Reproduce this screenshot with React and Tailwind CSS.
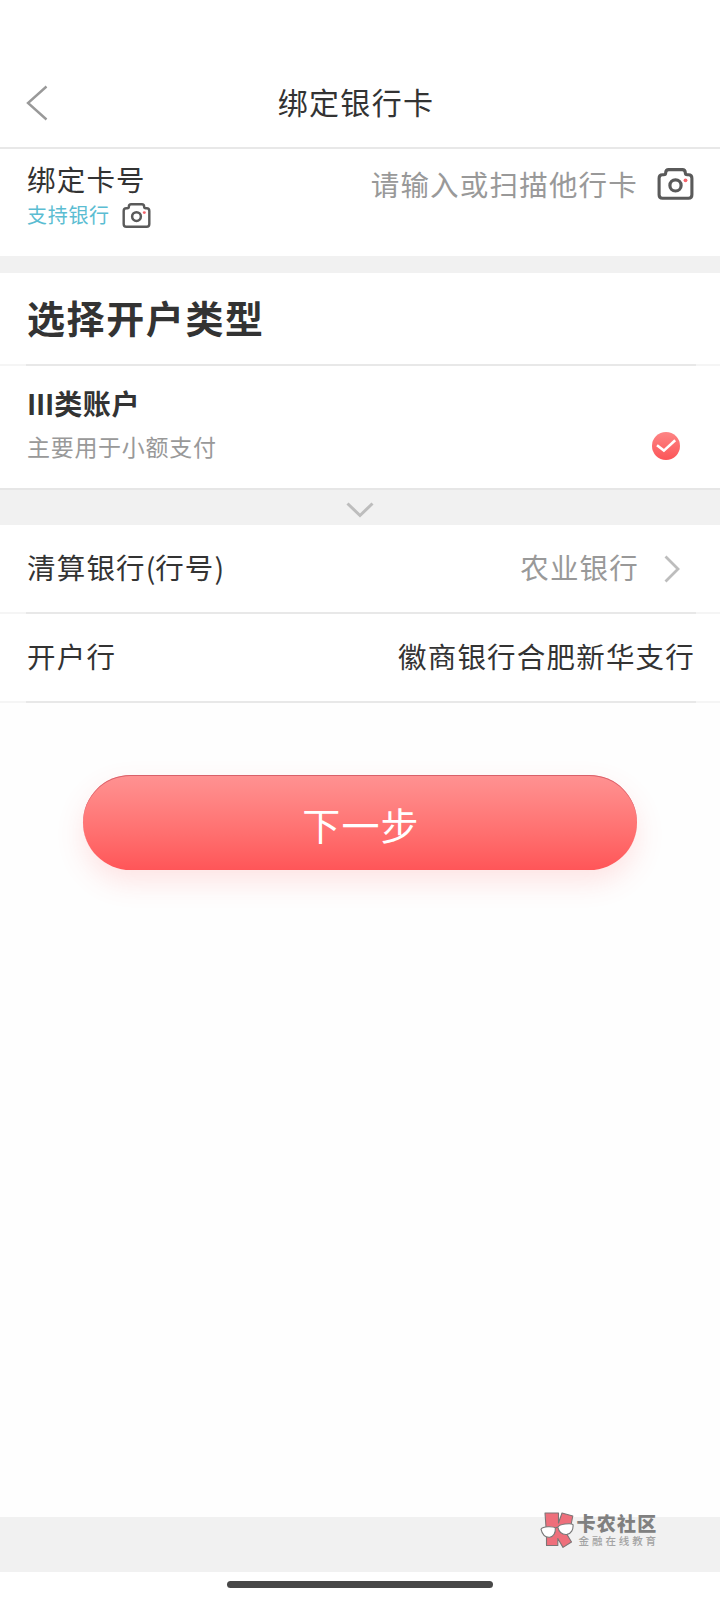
import React from 'react';

const CameraIcon = ({ className }) => (
  <svg viewBox="0 0 36 32" className={className} fill="none">
    <path
      d="M5 6.8 H6.2 C7.8 6.8 8.2 6.2 8.2 4.8 C8.2 2.4 9 1.6 11.2 1.6 H24.8 C27 1.6 27.8 2.4 27.8 4.8 C27.8 6.2 28.2 6.8 29.8 6.8 H31 C33.4 6.8 34.4 7.8 34.4 10.2 V26.8 C34.4 29.2 33.4 30.3 31 30.3 H5 C2.6 30.3 1.6 29.2 1.6 26.8 V10.2 C1.6 7.8 2.6 6.8 5 6.8 Z"
      stroke="#5a5a5a"
      strokeWidth="3.1"
    />
    <circle cx="18" cy="17.4" r="5.6" stroke="#5a5a5a" strokeWidth="3.2" />
    <circle cx="28" cy="12.3" r="1.9" fill="#f4636b" />
  </svg>
);

const Divider = () => (
  <div className="flex h-0.5 shrink-0 bg-[#f5f5f5] pr-6 pl-[26px]">
    <div className="flex-1 bg-[#e8e8e8]" />
  </div>
);

const Watermark = () => (
  <div className="flex">
    <svg viewBox="0 0 34 36" className="h-9 w-[34px]">
      <path
        d="M5 1 H18.5 V11 L22 1 L32.8 4 L31 13 L25.5 20 L31.5 30 L23 35.4 L17.8 26.5 V33.5 H6.5 V22 Z"
        fill="#ee6f7b"
        stroke="#7d7576"
        strokeWidth="1.1"
        strokeLinejoin="round"
      />
      <path d="M1 17.2 C2 15.6 5 14.8 8 14.7 C11 14.6 14.4 14.8 15.3 16 C15.8 21 13.4 24.8 9.8 25.2 C5.6 25.6 2.2 22.4 1 17.2 Z" fill="#fff" stroke="#777" strokeWidth="1.1" />
      <path d="M17.8 15.2 C18.6 13.4 21.6 12.4 25 12 C28.4 11.6 32 11.6 33 12.6 C33.6 17.6 31 21.8 27 22.4 C22.4 22.8 19 20.4 17.8 15.2 Z" fill="#fff" stroke="#777" strokeWidth="1.1" />
      <path d="M15.3 16 L17.8 15.2" stroke="#777" strokeWidth="1.3" />
    </svg>
    <div className="ml-[3px] flex flex-col whitespace-nowrap">
      <span className="text-[19px] leading-[22px] font-black tracking-[1.2px] text-[#808080]">卡农社区</span>
      <span className="ml-0.5 text-[10.5px] leading-[13px] font-medium tracking-[2.9px] text-[#a3a3a3]">金融在线教育</span>
    </div>
  </div>
);

const InfoRow = ({ label, children }) => (
  <div className="flex h-[87px] items-center justify-between pb-[3px] pl-[27px] text-[28.5px] leading-[42px] tracking-[1.2px]">
    {label}
    {children}
  </div>
);

const App = () => {
  return (
    <div className="flex h-[1600px] w-[720px] flex-col overflow-hidden bg-[#fefefe] font-['Noto_Sans_CJK_SC',sans-serif] text-[#333333]">
      {/* Header */}
      <header className="grid h-[149px] shrink-0 grid-cols-[1fr_auto_1fr] items-center border-b-2 border-[#e8e8e8] bg-white pt-[59px]">
        <svg viewBox="0 0 22 36" className="ml-[26px] h-9 w-[22px]" fill="none">
          <path d="M20.5 1.5 L2 18 L20.5 34.5" stroke="#999999" strokeWidth="2.4" />
        </svg>
        <h1 className="mr-2 mb-1 text-[30px] leading-[44px] tracking-[1.3px]">绑定银行卡</h1>
      </header>

      {/* Card number */}
      <section className="flex h-[107px] shrink-0 justify-between bg-white pl-[27px]">
        <div className="pt-[9px]">
          <div className="text-[28.5px] leading-[42px] tracking-[1.2px]">绑定卡号</div>
          <div className="mt-px flex items-center text-[20px] leading-7 tracking-[0.7px] text-[#5bbdd2]">
            支持银行
            <CameraIcon className="ml-3 h-[25px] w-[29px]" />
          </div>
        </div>
        <div className="flex h-[70px] items-center pr-[26px] text-[28.5px] tracking-[1.2px] text-[#999999]">
          <span>请输入或扫描他行卡</span>
          <CameraIcon className="ml-[19px] h-8 w-[37px]" />
        </div>
      </section>

      <div className="h-[17px] shrink-0 bg-[#f1f1f1]" />

      {/* Account type */}
      <section className="bg-white">
        <h2 className="flex h-[91px] items-center pb-[5px] pl-[27px] text-[38px] font-bold tracking-[1.6px]">选择开户类型</h2>
        <Divider />
        <div className="flex h-[122px] justify-between pt-4 pr-10 pl-[27px]">
          <div>
            <div className="text-[28px] leading-[42px] font-bold tracking-[0.7px]">
              <span className="tracking-[-0.2px]">III</span>类账户
            </div>
            <div className="mt-px text-[23px] leading-[42px] tracking-[0.7px] text-[#999999]">主要用于小额支付</div>
          </div>
          <svg viewBox="0 0 28 28" className="mt-[50px] h-7 w-7" fill="none">
            <defs>
              <linearGradient id="check" x1="0" y1="0" x2="0" y2="1">
                <stop offset="0" stopColor="#fd8585" />
                <stop offset="1" stopColor="#fc5558" />
              </linearGradient>
            </defs>
            <circle cx="14" cy="14" r="14" fill="url(#check)" />
            <path d="M5 13.2 L11.9 18.6 L23.2 8.2" stroke="#fff" strokeWidth="2.6" />
          </svg>
        </div>
      </section>

      <div className="flex h-[37px] shrink-0 items-center justify-center border-t-2 border-[#e6e6e6] bg-[#f1f1f1]">
        <svg viewBox="0 0 28 16" className="mt-1 h-4 w-7" fill="none">
          <path d="M1.5 1.5 L14 13.5 L26.5 1.5" stroke="#bdbdbd" strokeWidth="3" />
        </svg>
      </div>

      {/* Bank info */}
      <section className="bg-white">
        <InfoRow label={<span>清算银行<span className="tracking-[-0.3px]">(</span>行号)</span>}>
          <div className="flex items-center pr-10">
            <span className="text-[#999999]">农业银行</span>
            <svg viewBox="0 0 16 28" className="mt-[3px] ml-[25px] h-7 w-4" fill="none">
              <path d="M1.5 1.5 L14 14 L1.5 26.5" stroke="#bdbdbd" strokeWidth="2.8" />
            </svg>
          </div>
        </InfoRow>
        <Divider />
        <InfoRow label="开户行">
          <span className="pr-[25px]">徽商银行合肥新华支行</span>
        </InfoRow>
        <Divider />
      </section>

      <button className="mx-auto mt-[72px] h-[95px] w-[554px] shrink-0 rounded-full bg-linear-to-b from-[#ff9292] to-[#ff5558] pt-[3px] pl-0.5 text-[38px] leading-none tracking-[1.2px] text-white shadow-[inset_0_1px_0_#d9606a,0_12px_28px_rgba(255,85,88,0.16)]">
        下一步
      </button>

      {/* Bottom bar */}
      <footer className="mt-auto shrink-0">
        <div className="flex h-[55px] justify-end bg-[#f1f1f1] pr-[61px]">
          <div className="-mt-[5px]">
            <Watermark />
          </div>
        </div>
        <div className="flex h-7 justify-center bg-white pt-[9px]">
          <div className="h-[7px] w-[266px] rounded-full bg-[#484848]" />
        </div>
      </footer>
    </div>
  );
};

export default App;
